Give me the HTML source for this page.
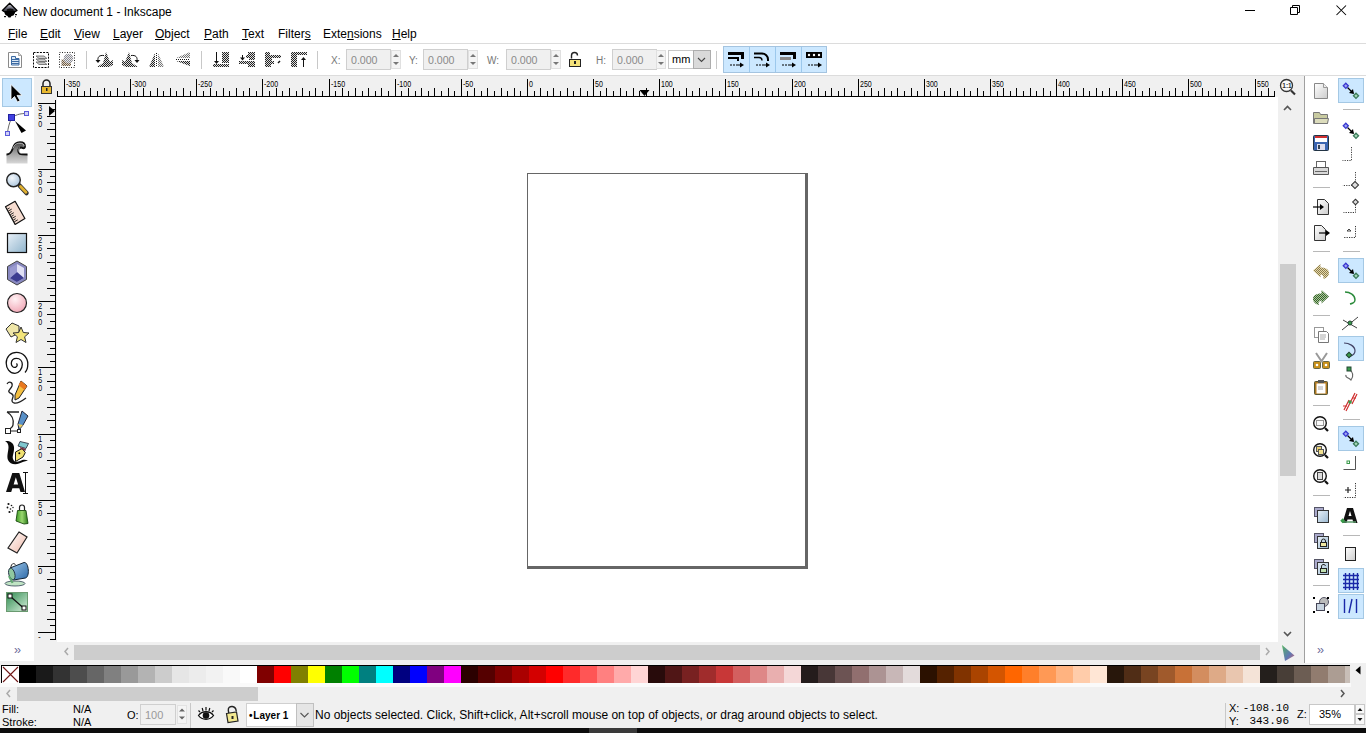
<!DOCTYPE html>
<html><head><meta charset="utf-8"><title>New document 1 - Inkscape</title>
<style>
html,body{margin:0;padding:0}
body{width:1366px;height:733px;position:relative;overflow:hidden;background:#fff;font-family:"Liberation Sans",sans-serif;color:#000}
.a{position:absolute}
.t{position:absolute;white-space:nowrap;font-size:12px;line-height:14px}
.menu u{text-decoration:underline;text-underline-offset:1px;text-decoration-thickness:1px}
.entry{position:absolute;background:#f0f0f0;border:1px solid #cfcfcf;box-sizing:border-box;color:#8a8a8a;font-size:12px;line-height:21px;padding-left:4px}
.spin{position:absolute;background:#f4f4f4;border:1px solid #e0e0e0;box-sizing:border-box}
.sep{position:absolute;background:#c8c8c8}
</style></head><body>
<!-- title bar -->
<div class="t" style="left:23px;top:5px;font-size:12px">New document 1 - Inkscape</div>
<svg class="a" style="left:0;top:0" width="22" height="22" viewBox="0 0 22 22">
<defs><linearGradient id="ig" x1="0" y1="0" x2="0" y2="1"><stop offset="0" stop-color="#f0f0f0"/><stop offset="0.55" stop-color="#606070"/><stop offset="1" stop-color="#111"/></linearGradient></defs>
<path d="M9.7 3.2L17 10.5L13 13L9.7 11.5L6.5 13L2.4 10.5Z" fill="url(#ig)" stroke="#000" stroke-width="1.3" stroke-linejoin="round"/>
<ellipse cx="10.2" cy="10.3" rx="3.5" ry="1.8" fill="#111"/>
<path d="M5 11L15 11L15 13L13.5 15.5L11.5 16L10.5 17.5L8.5 17.5L7.5 16L5.5 15L4.5 13Z" fill="#000"/>
<rect x="4" y="16" width="2" height="1.2" fill="#111"/><rect x="15" y="14" width="2" height="1.2" fill="#111"/><rect x="15" y="16.2" width="1" height="1" fill="#333"/>
</svg>
<svg class="a" style="left:1236px;top:0" width="130" height="22">
<rect x="9" y="10" width="10" height="1" fill="#000"/>
<path d="M54.5 7.5h7v7h-7z M56.5 7.5v-2h7v7h-2" stroke="#000" fill="none"/>
<path d="M100.5 5.5L110 15M110 5.5L100.5 15" stroke="#000" stroke-width="1.05" fill="none"/>
</svg>
<!-- menu -->
<div class="t menu" style="left:8px;top:27px"><u>F</u>ile</div>
<div class="t menu" style="left:40px;top:27px"><u>E</u>dit</div>
<div class="t menu" style="left:74px;top:27px"><u>V</u>iew</div>
<div class="t menu" style="left:113px;top:27px"><u>L</u>ayer</div>
<div class="t menu" style="left:155px;top:27px"><u>O</u>bject</div>
<div class="t menu" style="left:204px;top:27px"><u>P</u>ath</div>
<div class="t menu" style="left:242px;top:27px"><u>T</u>ext</div>
<div class="t menu" style="left:278px;top:27px">Filter<u>s</u></div>
<div class="t menu" style="left:323px;top:27px">Exte<u>n</u>sions</div>
<div class="t menu" style="left:392px;top:27px"><u>H</u>elp</div>
<div class="a" style="left:0;top:43px;width:1366px;height:1px;background:#dcdcdc"></div>
<!-- toolbar -->
<svg class="a" style="left:0;top:44px" width="830" height="31" viewBox="0 44 830 31">
<defs>
<pattern id="chk" width="2" height="2" patternUnits="userSpaceOnUse"><rect width="2" height="2" fill="#ddd"/><rect width="1" height="1" fill="#222"/><rect x="1" y="1" width="1" height="1" fill="#222"/></pattern>
<pattern id="chkl" width="2" height="2" patternUnits="userSpaceOnUse"><rect width="2" height="2" fill="#eee"/><rect width="1" height="1" fill="#777"/><rect x="1" y="1" width="1" height="1" fill="#777"/></pattern>
</defs>
<!-- doc props -->
<path d="M8.5 52.5h10l3 3v12h-13z" fill="#fff" stroke="#8a8a8a"/>
<path d="M18.5 52.5v3h3" fill="#ddd" stroke="#aaa"/>
<path d="M11.5 56.5h4v2h3.5v6.5h-7.5z" fill="#dbe8f4" stroke="#3b6aa3"/>
<rect x="12" y="59" width="7" height="1" fill="#3b6aa3"/><rect x="12" y="61" width="7" height="1" fill="#3b6aa3"/><rect x="12" y="63" width="7" height="1" fill="#3b6aa3"/>
<!-- select all -->
<rect x="33.5" y="52.5" width="15" height="15" fill="none" stroke="#000" stroke-dasharray="2 1.2"/>
<path d="M36 56h8l3 2.5h-8z M36 59h8l3 2.5h-8z M36 62h8l3 2.5h-8z" fill="#ccc" stroke="#666" stroke-width="0.8"/>
<!-- select all all layers -->
<rect x="59.5" y="52.5" width="15" height="15" fill="none" stroke="#222" stroke-dasharray="1 1.5"/>
<pattern id="chkc" width="2" height="2" patternUnits="userSpaceOnUse"><rect width="2" height="2" fill="#e8e8ec"/><rect width="1" height="1" fill="#8a8a90"/><rect x="1" y="1" width="1" height="1" fill="#8a8a90"/></pattern>
<pattern id="chkb" width="2" height="2" patternUnits="userSpaceOnUse"><rect width="2" height="2" fill="#e0d4c0"/><rect width="1" height="1" fill="#6a5a4a"/><rect x="1" y="1" width="1" height="1" fill="#6a5a4a"/></pattern>
<path d="M61.5 59.5h4l1 1h4.5v5.5h-9.5z" fill="url(#chkb)"/>
<circle cx="68.5" cy="58.5" r="4.8" fill="url(#chkc)"/>
<rect x="86" y="51" width="1" height="18" fill="#c8c8c8"/>
<!-- rotate ccw -->
<path d="M106 52L110 62L113 60V65L109 67H97L103 63Z" fill="url(#chk)"/>
<path d="M104 55.5C99 55 97.5 57 98 61" fill="none" stroke="#111" stroke-width="1"/><path d="M95.5 60h5l-2.5 3z" fill="#111"/>
<!-- rotate cw -->
<path d="M129 52L125 62L122 60V65L126 67H138L132 63Z" fill="url(#chk)"/>
<path d="M131 55.5C136 55 137.5 57 137 61" fill="none" stroke="#111" stroke-width="1"/><path d="M134.5 60h5l-2.5 3z" fill="#111"/>
<!-- flip h -->
<path d="M155 53V67H149Z" fill="url(#chk)"/><path d="M158 53V67H164Z" fill="url(#chkl)"/>
<path d="M156.5 53V67" stroke="#111" stroke-dasharray="1 1"/>
<!-- flip v -->
<path d="M190 52V58H176Z" fill="url(#chkl)"/><path d="M190 66V61H176Z" fill="url(#chk)"/>
<path d="M176 59.5H190" stroke="#111" stroke-dasharray="1 1"/>
<rect x="201" y="51" width="1" height="18" fill="#c8c8c8"/>
<!-- z-order -->
<g fill="url(#chk)">
<rect x="222" y="52" width="7" height="11"/><rect x="213" y="64" width="16" height="3"/>
<rect x="248" y="52" width="7" height="3"/><rect x="246" y="55" width="9" height="3"/><rect x="249" y="58" width="6" height="2"/><rect x="239" y="61" width="16" height="3"/><rect x="248" y="64" width="7" height="3"/>
<rect x="265" y="52" width="5" height="3"/><rect x="265" y="55" width="16" height="3"/><rect x="265" y="58" width="7" height="3"/><rect x="265" y="61" width="9" height="3"/><rect x="265" y="64" width="6" height="3"/>
<rect x="291" y="52" width="16" height="3"/><rect x="291" y="55" width="6" height="12"/>
</g>
<path d="M216.5 52V63" stroke="#111"/><path d="M214 61h5l-2.5 3z" fill="#111"/>
<path d="M242.5 55V59" stroke="#111"/><path d="M240 57.5h5l-2.5 3z" fill="#111"/>
<path d="M278 63L280 61" stroke="#111" stroke-width="1.5"/>
<path d="M303.5 58V67" stroke="#111"/><path d="M301 60h5l-2.5 -3z" fill="#111"/>
<rect x="317" y="51" width="1" height="18" fill="#c8c8c8"/>
<!-- lock -->
<path d="M571.5 58.5v-3a3 3 0 0 1 6 0" fill="none" stroke="#222" stroke-width="1.4"/>
<rect x="569.5" y="59.5" width="11" height="7" fill="#f5e27a" stroke="#222"/>
<rect x="574" y="61" width="2" height="3" fill="#222"/>
<rect x="716" y="51" width="1" height="18" fill="#c8c8c8"/>
<!-- blue toggle group -->
<rect x="723.5" y="46.5" width="103" height="26" fill="#cce8ff" stroke="#a4c4e0"/>
<rect x="749" y="47" width="1" height="25" fill="#9cc8ec"/><rect x="775" y="47" width="1" height="25" fill="#9cc8ec"/><rect x="801" y="47" width="1" height="25" fill="#9cc8ec"/>
<g fill="#000">
<rect x="728" y="52" width="16" height="3"/><rect x="741" y="52" width="3" height="7"/><rect x="728" y="57" width="11" height="2"/><rect x="737" y="57" width="2" height="4"/>
<path d="M754 53.5h8a6 6 0 0 1 6 6v1.5" fill="none" stroke="#000" stroke-width="2"/><path d="M754 57.5h5a3 3 0 0 1 3 3" fill="none" stroke="#000" stroke-width="1.4"/>
<rect x="780" y="52" width="16" height="3"/><rect x="793" y="52" width="3" height="7"/><rect x="780" y="57" width="11" height="3" fill="#888"/>
<rect x="806" y="52" width="16" height="6"/>
</g>
<g transform="translate(26 0)"><rect x="754" y="52" width="0" height="0"/></g>
<g fill="#000">
<path d="M730 65h2M733 65h2M736 65h4" stroke="#000" stroke-width="1.2"/><path d="M740 62.5L744 65L740 67.5Z"/>
<path d="M756 65h2M759 65h2M762 65h4" stroke="#000" stroke-width="1.2"/><path d="M766 62.5L770 65L766 67.5Z"/>
<path d="M782 65h2M785 65h2M788 65h4" stroke="#000" stroke-width="1.2"/><path d="M792 62.5L796 65L792 67.5Z"/>
<path d="M808 65h2M811 65h2M814 65h4" stroke="#000" stroke-width="1.2"/><path d="M818 62.5L822 65L818 67.5Z"/>
</g>
<g fill="#fff"><circle cx="809" cy="55" r="1.2"/><circle cx="814" cy="55" r="1.2"/><circle cx="819" cy="55" r="1.2"/></g>
</svg>
<div class="t" style="left:331px;top:55px;font-size:10px;line-height:12px;color:#777">X:</div>
<div class="entry" style="left:346px;top:49px;width:45px;height:21px;font-size:10.6px">0.000</div>
<div class="spin" style="left:391px;top:50px;width:10px;height:19px"></div>
<div class="t" style="left:409px;top:55px;font-size:10px;line-height:12px;color:#777">Y:</div>
<div class="entry" style="left:423px;top:49px;width:45px;height:21px;font-size:10.6px">0.000</div>
<div class="spin" style="left:468px;top:50px;width:10px;height:19px"></div>
<div class="t" style="left:487px;top:55px;font-size:10px;line-height:12px;color:#777">W:</div>
<div class="entry" style="left:506px;top:49px;width:45px;height:21px;font-size:10.6px">0.000</div>
<div class="spin" style="left:551px;top:50px;width:10px;height:19px"></div>
<div class="t" style="left:596px;top:55px;font-size:10px;line-height:12px;color:#777">H:</div>
<div class="entry" style="left:612px;top:49px;width:45px;height:21px;font-size:10.6px">0.000</div>
<div class="spin" style="left:656px;top:50px;width:10px;height:19px"></div>
<div class="a" style="left:668px;top:50px;width:26px;height:19px;background:#fff;border:1px solid #c8c8c8;box-sizing:border-box;font-size:11px;line-height:17px;padding-left:3px">mm</div>
<div class="a" style="left:693px;top:50px;width:18px;height:19px;background:#dadada;border:1px solid #adadad;box-sizing:border-box"></div>
<svg class="a" style="left:0;top:44px" width="720" height="31" viewBox="0 44 720 31">
<g fill="#777">
<path d="M393 57l3-3 3 3z"/><path d="M393 62l3 3 3-3z"/>
<path d="M470 57l3-3 3 3z"/><path d="M470 62l3 3 3-3z"/>
<path d="M553 57l3-3 3 3z"/><path d="M553 62l3 3 3-3z"/>
<path d="M658 57l3-3 3 3z"/><path d="M658 62l3 3 3-3z"/>
</g>
<path d="M698 58l3.5 3.5l3.5-3.5" fill="none" stroke="#444" stroke-width="1.1"/>
</svg>
<div class="a" style="left:0;top:75px;width:1366px;height:1px;background:#dcdcdc"></div>

<!-- toolbox -->
<svg class="a" style="left:0;top:76px" width="35" height="564" viewBox="0 76 35 564">
<defs>
<linearGradient id="rectg" x1="0" y1="0" x2="1" y2="1"><stop offset="0" stop-color="#e8f0f8"/><stop offset="1" stop-color="#8fb4cc"/></linearGradient>
<radialGradient id="zg" cx="0.4" cy="0.35" r="0.7"><stop offset="0" stop-color="#f4f8fc"/><stop offset="1" stop-color="#a9c4dc"/></radialGradient>
<radialGradient id="cg" cx="0.4" cy="0.3" r="0.8"><stop offset="0" stop-color="#fff2f4"/><stop offset="1" stop-color="#f0a0b0"/></radialGradient>
<linearGradient id="twg" x1="0" y1="0" x2="0" y2="1"><stop offset="0" stop-color="#555"/><stop offset="1" stop-color="#ddd"/></linearGradient>
<linearGradient id="gg" x1="0" y1="0" x2="1" y2="1"><stop offset="0" stop-color="#2e8b50"/><stop offset="1" stop-color="#d8f0dc"/></linearGradient>
</defs>
<rect x="2.5" y="78.5" width="29" height="28" fill="#cce8ff" stroke="#a4c8e4"/>
<!-- selector -->
<path d="M11 84.5V100l3.5-3.5l3 5.5l2.5-1.3l-3-5.3h5z" fill="#000" stroke="#fff" stroke-width="0.8"/>
<!-- node -->
<path d="M12 117.5C17 114 22 113.5 26 113.5M11.5 118C9 124 8 128 7.5 133" stroke="#555" fill="none" stroke-width="0.9"/>
<rect x="8.5" y="114.5" width="6" height="6" fill="#4040e0" stroke="#2020a0"/>
<rect x="24.5" y="111.5" width="4" height="4" fill="#d0d0f8" stroke="#5a5ad8"/>
<rect x="5.5" y="131.5" width="4" height="4" fill="#d0d0f8" stroke="#5a5ad8"/>
<path d="M15 121L26 130.5L21.5 133Z" fill="#000"/>
<!-- tweak -->
<linearGradient id="twg2" x1="0" y1="0" x2="0" y2="1"><stop offset="0" stop-color="#444"/><stop offset="0.45" stop-color="#999"/><stop offset="1" stop-color="#d8d8d8"/></linearGradient>
<path d="M6.5 154.5C10 154.5 11.5 152 12.5 149C14 144 16 142.3 20 142.3C23.5 142.3 25 144 25 146.5C25 148 24 148.5 23 148.2C21.5 147 20 147.5 19 148.5C17.8 150 18 152.5 20 154C21 154.5 23 154.5 27.5 154.5V163.5H6.5Z" fill="url(#twg2)"/>
<path d="M6.5 154.5C10 154.5 11.5 152 12.5 149C14 144 16 142.3 20 142.3C23.5 142.3 25 144 25 146.5C25 148 24 148.5 23 148.2C21.5 147 20 147.5 19 148.5C17.8 150 18 152.5 20 154C21 154.5 23 154.5 27.5 154.5" fill="none" stroke="#111" stroke-width="1.9"/>
<path d="M13 148.5C14.5 144.5 16.5 143.2 20 143.2C22.5 143.2 24 144.2 24.2 146.2M19.5 147.5C18.5 149 18.5 152 20.5 153.2" fill="none" stroke="#fff" stroke-width="0.7"/>
<!-- zoom -->
<path d="M19.5 185.5L26.5 193" stroke="#333" stroke-width="4.5" stroke-linecap="round"/>
<path d="M20.5 186.5L26 192.3" stroke="#e0b030" stroke-width="2.8" stroke-linecap="round"/>
<circle cx="13.5" cy="180" r="6.8" fill="url(#zg)" stroke="#222" stroke-width="1.4"/>
<!-- measure -->
<path d="M5.5 206.8L15.1 201.3L24.9 218.5L15.1 224.4Z" fill="#f6dcd0" stroke="#111" stroke-width="1.2" stroke-linejoin="round"/>
<path d="M7.21 209.29l2.44 -1.38M8.22 211.08l3.48 -1.97M9.23 212.87l2.44 -1.38M10.24 214.66l3.48 -1.97M11.26 216.44l2.44 -1.38M12.27 218.23l3.48 -1.97M13.28 220.02l2.44 -1.38M14.29 221.81l3.48 -1.97" stroke="#111" stroke-width="0.9"/>
<!-- rect -->
<rect x="7.5" y="233.5" width="19" height="19" fill="url(#rectg)" stroke="#111" stroke-width="1.2"/>
<!-- 3d box -->
<path d="M17 261L26.5 266.5V279.5L17 285L7.5 279.5V266.5Z" fill="#8888c0" stroke="#444" stroke-width="1"/>
<path d="M17 264L24 268V278L17 282V272Z" fill="#e0e0f4"/>
<path d="M17 272L24 278L17 282L10 278Z" fill="#3c3c90"/>
<path d="M17 264V272L10 278V268Z" fill="#9a9ad0"/>
<!-- circle -->
<circle cx="17" cy="303" r="9.5" fill="url(#cg)" stroke="#222" stroke-width="1.2"/>
<!-- star -->
<path d="M6 329L12 323L19 326L19 333L11 337Z" fill="#efe6a8" stroke="#333" stroke-width="1"/>
<path d="M21 327L23.3 332.5L29 333L24.6 336.8L26 342.5L21 339.5L16 342.5L17.4 336.8L13 333L18.7 332.5Z" fill="#f2e47a" stroke="#333" stroke-width="1"/>
<!-- spiral -->
<path d="M16.3 363.6C17.5 364 17.8 366.5 15.5 367.3C13 368 11.2 365.5 11.3 363.2C11.5 360 13.8 358.3 16.5 358.3C20 358.3 22.3 361 22.3 364.5C22.3 369 18.8 373.3 15 373.3C9.5 373.3 6.2 368 6.2 363C6.2 357 10.5 352.3 16.5 352.3C23 352.3 27.8 357.5 27.8 364C27.8 368 26.5 371 25 372.5" fill="none" stroke="#111" stroke-width="1.3"/>
<!-- pencil -->
<path d="M7 384C9 381 13 382 12 386C11 389 8 390 9 392C10 394 14 393 13 397C12 400 11 402 14 403C18 404 22 401 26 398" fill="none" stroke="#222" stroke-width="1.3"/>
<path d="M21 381L27 386L19 398L15 400L15 395Z" fill="#f5c040" stroke="#222" stroke-width="1"/>
<path d="M21 381L27 386L24.5 390L18.5 385Z" fill="#e87820"/>
<!-- pen -->
<path d="M7 412H19M7 412C12 415 14 420 13 425C12.5 428 10 429 8 430" fill="none" stroke="#222" stroke-width="1.3"/>
<rect x="5.5" y="428.5" width="5" height="5" fill="#fff" stroke="#222"/><path d="M11 431H17" stroke="#222"/><rect x="17.5" y="429.5" width="3" height="3" fill="#fff" stroke="#222"/>
<path d="M22 411L28 416L23 425L19 430L18 424Z" fill="#5890c8" stroke="#223" stroke-width="1"/>
<path d="M18 424L23 425L20 428Z" fill="#f0d060"/>
<!-- calligraphy -->
<path d="M5 441C9 440.5 13.5 442 14 447C14.5 452 12 456 13 459C14 462 17 462.5 20 461C23 459.5 25 459.5 28 460.5C25 461 22 462 19 463.5C15 465 9.5 464 8 460C6.5 456 8.5 451 8.5 447C8.5 444 7 442 5 441Z" fill="#0a0a0a"/>
<path d="M15.5 452L22 448.5L25.3 452.5L23 457L15.5 461.5Z" fill="#f0e070" stroke="#111" stroke-width="1"/>
<circle cx="19.3" cy="453.2" r="1" fill="#000"/>
<path d="M18 446L20 441.5L28.5 443.5L26 448.5Z" fill="#80c8d0" stroke="#223" stroke-width="0.8"/>
<path d="M20 447L26 449L25.3 451L20.5 449Z" fill="#703040"/>
<!-- text -->
<path d="M12.3 473H19.3L25 492H20.5L19.3 488.2H12.4L11.2 492H6ZM13.6 484.4H18.1L15.85 477.3Z" fill="#111"/>
<path d="M23 472.5h5M25.5 472.5V493.5M23 493.5h5" stroke="#111" stroke-width="1" fill="none"/>
<!-- spray -->
<g fill="#111"><circle cx="8.5" cy="504" r="1.1"/><circle cx="11.5" cy="505.5" r="0.8"/><circle cx="7.5" cy="507.5" r="0.9"/><circle cx="10.5" cy="509" r="0.8"/><circle cx="13" cy="507.5" r="0.7"/><circle cx="9.5" cy="512" r="1.1"/><circle cx="12.5" cy="511" r="0.7"/></g>
<path d="M19.5 510v-2.5a2.5 2.5 0 0 1 5 0v2.5" fill="none" stroke="#222" stroke-width="1.2"/>
<linearGradient id="spg" x1="0" y1="0" x2="1" y2="0"><stop offset="0" stop-color="#3a9a20"/><stop offset="0.5" stop-color="#9ad870"/><stop offset="1" stop-color="#2a7a18"/></linearGradient>
<path d="M17.5 510.5L26 510.5L28 523.5L24 524L16 521Z" fill="url(#spg)" stroke="#1a4a10" stroke-width="0.9"/>
<!-- eraser -->
<linearGradient id="erg" x1="0" y1="0" x2="1" y2="1"><stop offset="0" stop-color="#fff"/><stop offset="1" stop-color="#f0b8a8"/></linearGradient><path d="M19 532L27 537L17 553L8 548Z" fill="url(#erg)" stroke="#222" stroke-width="1.2"/>
<!-- bucket -->
<ellipse cx="15" cy="583.5" rx="10" ry="2.5" fill="#c0e4c4" stroke="#345" stroke-width="0.8"/>
<linearGradient id="bkg" x1="0" y1="0" x2="1" y2="1"><stop offset="0" stop-color="#a0c8e8"/><stop offset="1" stop-color="#2a68a8"/></linearGradient>
<path d="M10 568L24 562.5C26.5 562 28 566 28.3 570C28.6 574 27.5 577.5 25.5 578L13.5 580Z" fill="url(#bkg)" stroke="#123" stroke-width="1"/>
<ellipse cx="11.8" cy="574" rx="3" ry="6" transform="rotate(-15 11.8 574)" fill="#90c8a0" stroke="#234" stroke-width="0.9"/>
<path d="M11 568C10.5 564 14 562 15.5 565" fill="none" stroke="#222" stroke-width="1"/>
<path d="M9 576C10 579 12 581 12.5 583" stroke="#60a870" stroke-width="2" fill="none"/>
<!-- gradient -->
<rect x="6.5" y="592.5" width="21" height="19" fill="url(#gg)" stroke="#6a9a70"/>
<path d="M10.5 596.5L23.5 608" stroke="#111" stroke-width="1.2"/>
<rect x="8" y="594" width="4" height="4" fill="#fff" stroke="#111"/>
<rect x="22" y="606" width="4" height="4" fill="#fff" stroke="#111"/>
</svg>
<div class="a" style="left:14px;top:644px;font-size:12px;line-height:12px;color:#6a6a9a;letter-spacing:-1px">&#8250;&#8250;</div>
<!-- rulers bg -->
<div class="a" style="left:34px;top:76px;width:1244px;height:21px;background:#f0f0f0"></div>
<div class="a" style="left:34px;top:97px;width:23px;height:545px;background:#f0f0f0"></div>
<svg style="position:absolute;left:57px;top:76px" width="1218" height="21"><rect x="0" y="20" width="1218" height="1" fill="#000"/><path d="M0.5 15V20M7.5 3V20M14.5 15V20M20.5 12V20M27.5 15V20M33.5 12V20M40.5 15V20M47.5 12V20M53.5 15V20M60.5 12V20M67.5 15V20M73.5 3V20M80.5 15V20M86.5 12V20M93.5 15V20M100.5 12V20M106.5 15V20M113.5 12V20M119.5 15V20M126.5 12V20M133.5 15V20M139.5 3V20M146.5 15V20M153.5 12V20M159.5 15V20M166.5 12V20M172.5 15V20M179.5 12V20M186.5 15V20M192.5 12V20M199.5 15V20M205.5 3V20M212.5 15V20M219.5 12V20M225.5 15V20M232.5 12V20M239.5 15V20M245.5 12V20M252.5 15V20M258.5 12V20M265.5 15V20M272.5 3V20M278.5 15V20M285.5 12V20M291.5 15V20M298.5 12V20M305.5 15V20M311.5 12V20M318.5 15V20M324.5 12V20M331.5 15V20M338.5 3V20M344.5 15V20M351.5 12V20M358.5 15V20M364.5 12V20M371.5 15V20M377.5 12V20M384.5 15V20M391.5 12V20M397.5 15V20M404.5 3V20M410.5 15V20M417.5 12V20M424.5 15V20M430.5 12V20M437.5 15V20M444.5 12V20M450.5 15V20M457.5 12V20M463.5 15V20M470.5 3V20M477.5 15V20M483.5 12V20M490.5 15V20M496.5 12V20M503.5 15V20M510.5 12V20M516.5 15V20M523.5 12V20M530.5 15V20M536.5 3V20M543.5 15V20M549.5 12V20M556.5 15V20M563.5 12V20M569.5 15V20M576.5 12V20M582.5 15V20M589.5 12V20M596.5 15V20M602.5 3V20M609.5 15V20M616.5 12V20M622.5 15V20M629.5 12V20M635.5 15V20M642.5 12V20M649.5 15V20M655.5 12V20M662.5 15V20M668.5 3V20M675.5 15V20M682.5 12V20M688.5 15V20M695.5 12V20M701.5 15V20M708.5 12V20M715.5 15V20M721.5 12V20M728.5 15V20M735.5 3V20M741.5 15V20M748.5 12V20M754.5 15V20M761.5 12V20M768.5 15V20M774.5 12V20M781.5 15V20M787.5 12V20M794.5 15V20M801.5 3V20M807.5 15V20M814.5 12V20M821.5 15V20M827.5 12V20M834.5 15V20M840.5 12V20M847.5 15V20M854.5 12V20M860.5 15V20M867.5 3V20M873.5 15V20M880.5 12V20M887.5 15V20M893.5 12V20M900.5 15V20M907.5 12V20M913.5 15V20M920.5 12V20M926.5 15V20M933.5 3V20M940.5 15V20M946.5 12V20M953.5 15V20M959.5 12V20M966.5 15V20M973.5 12V20M979.5 15V20M986.5 12V20M993.5 15V20M999.5 3V20M1006.5 15V20M1012.5 12V20M1019.5 15V20M1026.5 12V20M1032.5 15V20M1039.5 12V20M1045.5 15V20M1052.5 12V20M1059.5 15V20M1065.5 3V20M1072.5 15V20M1078.5 12V20M1085.5 15V20M1092.5 12V20M1098.5 15V20M1105.5 12V20M1112.5 15V20M1118.5 12V20M1125.5 15V20M1131.5 3V20M1138.5 15V20M1145.5 12V20M1151.5 15V20M1158.5 12V20M1164.5 15V20M1171.5 12V20M1178.5 15V20M1184.5 12V20M1191.5 15V20M1198.5 3V20M1204.5 15V20M1211.5 12V20M1217.5 15V20" stroke="#000" stroke-width="1" fill="none"/><g font-family="Liberation Sans" font-size="8.6" fill="#000"><text transform="translate(9 11) scale(0.82 1)">-350</text><text transform="translate(75 11) scale(0.82 1)">-300</text><text transform="translate(141 11) scale(0.82 1)">-250</text><text transform="translate(207 11) scale(0.82 1)">-200</text><text transform="translate(274 11) scale(0.82 1)">-150</text><text transform="translate(340 11) scale(0.82 1)">-100</text><text transform="translate(406 11) scale(0.82 1)">-50</text><text transform="translate(472 11) scale(0.82 1)">0</text><text transform="translate(538 11) scale(0.82 1)">50</text><text transform="translate(604 11) scale(0.82 1)">100</text><text transform="translate(670 11) scale(0.82 1)">150</text><text transform="translate(737 11) scale(0.82 1)">200</text><text transform="translate(803 11) scale(0.82 1)">250</text><text transform="translate(869 11) scale(0.82 1)">300</text><text transform="translate(935 11) scale(0.82 1)">350</text><text transform="translate(1001 11) scale(0.82 1)">400</text><text transform="translate(1067 11) scale(0.82 1)">450</text><text transform="translate(1133 11) scale(0.82 1)">500</text><text transform="translate(1200 11) scale(0.82 1)">550</text></g></svg>
<svg style="position:absolute;left:35px;top:97px" width="22" height="543"><rect x="20" y="3" width="1" height="540" fill="#000"/><path d="M3 6.5H20M15 12.5H20M12 19.5H20M15 26.5H20M12 32.5H20M15 39.5H20M12 46.5H20M15 52.5H20M12 59.5H20M15 65.5H20M3 72.5H20M15 79.5H20M12 85.5H20M15 92.5H20M12 98.5H20M15 105.5H20M12 112.5H20M15 118.5H20M12 125.5H20M15 131.5H20M3 138.5H20M15 145.5H20M12 151.5H20M15 158.5H20M12 165.5H20M15 171.5H20M12 178.5H20M15 184.5H20M12 191.5H20M15 198.5H20M3 204.5H20M15 211.5H20M12 217.5H20M15 224.5H20M12 231.5H20M15 237.5H20M12 244.5H20M15 251.5H20M12 257.5H20M15 264.5H20M3 270.5H20M15 277.5H20M12 284.5H20M15 290.5H20M12 297.5H20M15 303.5H20M12 310.5H20M15 317.5H20M12 323.5H20M15 330.5H20M3 337.5H20M15 343.5H20M12 350.5H20M15 356.5H20M12 363.5H20M15 370.5H20M12 376.5H20M15 383.5H20M12 389.5H20M15 396.5H20M3 403.5H20M15 409.5H20M12 416.5H20M15 423.5H20M12 429.5H20M15 436.5H20M12 442.5H20M15 449.5H20M12 456.5H20M15 462.5H20M3 469.5H20M15 475.5H20M12 482.5H20M15 489.5H20M12 495.5H20M15 502.5H20M12 508.5H20M15 515.5H20M12 522.5H20M15 528.5H20M3 535.5H20M15 542.5H20" stroke="#000" stroke-width="1" fill="none"/><g font-family="Liberation Sans" font-size="8.6" fill="#000"><text transform="translate(3.299999999999997 14.3) scale(0.82 1)">3</text><text transform="translate(3.299999999999997 22.3) scale(0.82 1)">5</text><text transform="translate(3.299999999999997 30.3) scale(0.82 1)">0</text><text transform="translate(3.299999999999997 80.3) scale(0.82 1)">3</text><text transform="translate(3.299999999999997 88.3) scale(0.82 1)">0</text><text transform="translate(3.299999999999997 96.3) scale(0.82 1)">0</text><text transform="translate(3.299999999999997 146.3) scale(0.82 1)">2</text><text transform="translate(3.299999999999997 154.3) scale(0.82 1)">5</text><text transform="translate(3.299999999999997 162.3) scale(0.82 1)">0</text><text transform="translate(3.299999999999997 212.3) scale(0.82 1)">2</text><text transform="translate(3.299999999999997 220.3) scale(0.82 1)">0</text><text transform="translate(3.299999999999997 228.3) scale(0.82 1)">0</text><text transform="translate(3.299999999999997 278.3) scale(0.82 1)">1</text><text transform="translate(3.299999999999997 286.3) scale(0.82 1)">5</text><text transform="translate(3.299999999999997 294.3) scale(0.82 1)">0</text><text transform="translate(3.299999999999997 345.3) scale(0.82 1)">1</text><text transform="translate(3.299999999999997 353.3) scale(0.82 1)">0</text><text transform="translate(3.299999999999997 361.3) scale(0.82 1)">0</text><text transform="translate(3.299999999999997 411.3) scale(0.82 1)">5</text><text transform="translate(3.299999999999997 419.3) scale(0.82 1)">0</text><text transform="translate(3.299999999999997 477.3) scale(0.82 1)">0</text><text transform="translate(3.299999999999997 543.3) scale(0.82 1)">-</text><text transform="translate(3.299999999999997 551.3) scale(0.82 1)">5</text><text transform="translate(3.299999999999997 559.3) scale(0.82 1)">0</text></g></svg>
<!-- scrollbar column -->
<div class="a" style="left:1275px;top:76px;width:29px;height:584px;background:#f0f0f0"></div>
<div class="a" style="left:1278px;top:97px;width:0px;height:0px;"></div>
<div class="a" style="left:1280px;top:264px;width:16px;height:212px;background:#cdcdcd"></div>
<div class="a" style="left:1304px;top:76px;width:1px;height:587px;background:#a0a0a0"></div>
<!-- canvas placeholder -->
<div class="a" style="left:57px;top:97px;width:1221px;height:545px;background:#fff"></div>
<div class="a" style="left:527px;top:173px;width:277px;height:392px;border-left:1px solid #666;border-top:1px solid #666;border-right:3px solid #666;border-bottom:3px solid #666"></div>
<!-- hscroll -->
<div class="a" style="left:34px;top:642px;width:1270px;height:19px;background:#f0f0f0"></div>
<div class="a" style="left:74px;top:645px;width:1186px;height:15px;background:#cdcdcd"></div>
<!-- right panels -->
<svg class="a" style="left:1305px;top:76px" width="61" height="586" viewBox="1305 76 61 586">
<defs>
<linearGradient id="pg" x1="0" y1="0" x2="1" y2="1"><stop offset="0" stop-color="#fff"/><stop offset="1" stop-color="#ccc"/></linearGradient>
<linearGradient id="bl" x1="0" y1="0" x2="1" y2="1"><stop offset="0" stop-color="#e8f0f8"/><stop offset="1" stop-color="#9ab8d0"/></linearGradient>
<pattern id="chky" width="2" height="2" patternUnits="userSpaceOnUse"><rect width="2" height="2" fill="#e8dca8"/><rect width="1" height="1" fill="#8a7a50"/><rect x="1" y="1" width="1" height="1" fill="#8a7a50"/></pattern>
<pattern id="chkg" width="2" height="2" patternUnits="userSpaceOnUse"><rect width="2" height="2" fill="#a8d098"/><rect width="1" height="1" fill="#3a5a30"/><rect x="1" y="1" width="1" height="1" fill="#3a5a30"/></pattern>
</defs>
<!-- snap highlighted buttons -->
<g fill="#cce8ff" stroke="#a4c8e4">
<rect x="1338.5" y="78.5" width="25" height="24"/>
<rect x="1338.5" y="258.5" width="25" height="24"/>
<rect x="1338.5" y="336.5" width="25" height="24"/>
<rect x="1338.5" y="426.5" width="25" height="24"/>
<rect x="1338.5" y="568.5" width="25" height="24"/>
<rect x="1338.5" y="594.5" width="25" height="24"/>
</g>
<!-- separators -->
<g fill="#b8b8b8">
<rect x="1313" y="187" width="17" height="1"/><rect x="1313" y="251" width="17" height="1"/><rect x="1313" y="315" width="17" height="1"/>
<rect x="1313" y="405" width="17" height="1"/><rect x="1313" y="495" width="17" height="1"/><rect x="1313" y="585" width="17" height="1"/>
<rect x="1343" y="109" width="17" height="1"/><rect x="1343" y="251" width="17" height="1"/><rect x="1343" y="419" width="17" height="1"/><rect x="1343" y="535" width="17" height="1"/>
</g>
<!-- commands -->
<path d="M1314.5 83.5h9l4 4v11h-13z" fill="url(#pg)" stroke="#888"/><path d="M1323.5 83.5v4h4" fill="#eee" stroke="#999"/>
<path d="M1313.5 112.5h6l1 2h7v9h-14z" fill="#c8caa0" stroke="#777"/><path d="M1314.5 118.5h14l-1 5h-13z" fill="#dcdcbc" stroke="#777"/>
<rect x="1313.5" y="135.5" width="15" height="15" rx="1" fill="#3a64b0" stroke="#234"/><rect x="1315" y="136" width="12" height="6" fill="#fff"/><rect x="1315" y="136" width="12" height="2" fill="#d03030"/><rect x="1317" y="144" width="8" height="6" fill="#dde"/><rect x="1318" y="145" width="2" height="4" fill="#345"/>
<rect x="1316.5" y="161.5" width="9" height="6" fill="#fff" stroke="#666"/><path d="M1313.5 167.5h15v7h-15z" fill="#d8d8d8" stroke="#555"/><rect x="1315" y="171" width="12" height="1" fill="#666"/>
<path d="M1317.5 199.5h7l4 4v11h-11z" fill="url(#pg)" stroke="#333"/><path d="M1313 207h9" stroke="#000" stroke-width="1.2"/><path d="M1320 204l4 3l-4 3z" fill="#000"/>
<path d="M1314.5 225.5h7l4 4v11h-11z" fill="url(#pg)" stroke="#333"/><path d="M1319 233h9" stroke="#000" stroke-width="1.2"/><path d="M1326 230l4 3l-4 3z" fill="#000"/>
<path d="M1313 270.5L1320.5 264V267.5C1325 267.5 1329 269 1329 273C1329 276 1326 278.5 1323 279C1324 277 1323.5 275 1320.5 274.5V277.5Z" fill="url(#chky)"/>
<path d="M1329 296.5L1321.5 290V293.5C1317 293.5 1313 295 1313 299C1313 302 1316 304.5 1319 305C1318 303 1318.5 301 1321.5 300.5V303.5Z" fill="url(#chkg)"/>
<rect x="1314.5" y="327.5" width="9" height="10" fill="#fff" stroke="#999"/><path d="M1318.5 331.5h8l2 2v9h-10z" fill="#fff" stroke="#777"/><path d="M1320 335h6M1320 337h6M1320 339h5" stroke="#aaa"/>
<path d="M1316 353L1322 362M1327 353L1321 362" stroke="#999" stroke-width="2"/><rect x="1313.5" y="361.5" width="7" height="7" rx="1" fill="#c8901a" stroke="#664"/><rect x="1322.5" y="361.5" width="7" height="7" rx="1" fill="#c8901a" stroke="#664"/><circle cx="1317" cy="365" r="1.3" fill="#fff"/><circle cx="1326" cy="365" r="1.3" fill="#fff"/>
<rect x="1314.5" y="381.5" width="13" height="13" rx="1" fill="#b07820" stroke="#553"/><rect x="1316.5" y="383.5" width="9" height="10" fill="#fff"/><rect x="1318" y="380" width="6" height="3" fill="#555"/><path d="M1318 387h5M1318 389h5" stroke="#aaa"/>
<circle cx="1320" cy="423" r="6.3" fill="#f8f8f8" stroke="#111" stroke-width="1.4"/><rect x="1316.5" y="420.5" width="7" height="5" fill="none" stroke="#333" stroke-dasharray="1 1"/><path d="M1325 428l3 3" stroke="#111" stroke-width="2.2"/>
<circle cx="1320" cy="450" r="6.3" fill="#f8f8f8" stroke="#111" stroke-width="1.4"/><rect x="1316.5" y="446.5" width="5" height="5" fill="#e8d070" stroke="#555"/><rect x="1318.5" y="449.5" width="5" height="5" fill="#f0e090" stroke="#555"/><path d="M1325 455l3 3" stroke="#111" stroke-width="2.2"/>
<circle cx="1320" cy="476" r="6.3" fill="#f8f8f8" stroke="#111" stroke-width="1.4"/><rect x="1317.5" y="472.5" width="5" height="7" fill="#ddd" stroke="#444"/><path d="M1325 481l3 3" stroke="#111" stroke-width="2.2"/>
<rect x="1314.5" y="507.5" width="9" height="9" fill="#aac" stroke="#556"/><rect x="1317.5" y="510.5" width="11" height="12" fill="url(#bl)" stroke="#333"/>
<rect x="1314.5" y="533.5" width="9" height="9" fill="#aac" stroke="#556"/><rect x="1317.5" y="536.5" width="11" height="12" fill="url(#bl)" stroke="#333"/><rect x="1320.5" y="542.5" width="6" height="4" fill="#f0e8a0" stroke="#222"/><path d="M1321.5 542.5v-1.5a2 2 0 0 1 4 0v1.5" fill="none" stroke="#222"/>
<rect x="1314.5" y="559.5" width="9" height="9" fill="#aac" stroke="#556"/><rect x="1317.5" y="562.5" width="11" height="12" fill="url(#bl)" stroke="#333"/><rect x="1320.5" y="568.5" width="6" height="4" fill="#c0e0b0" stroke="#222"/><path d="M1321.5 568.5v-1.5a2 2 0 0 1 4 -1" fill="none" stroke="#222"/>
<circle cx="1324" cy="602" r="4.5" fill="#bbb" stroke="#556"/><rect x="1316.5" y="603.5" width="8" height="7" fill="#c8d4e0" stroke="#445"/><g fill="#000"><rect x="1313" y="597" width="2" height="2"/><rect x="1327" y="597" width="2" height="2"/><rect x="1313" y="611" width="2" height="2"/><rect x="1327" y="611" width="2" height="2"/></g>
<!-- snap icons -->
<g id="sn"><path d="M1347.5 87.5L1353 93" stroke="#000" stroke-width="1.3"/><path d="M1354 94l-5 -1l4 -4z" fill="#000"/><rect x="1344" y="84" width="3.6" height="3.6" transform="rotate(45 1345.8 85.8)" fill="#a0a8f0" stroke="#3838d0" stroke-width="1.3"/><rect x="1354.2" y="94" width="3.6" height="3.6" transform="rotate(45 1356 95.8)" fill="#a8d8b8" stroke="#3a7a5a" stroke-width="1.3"/></g>
<use href="#sn" y="40"/>
<use href="#sn" y="180"/>
<use href="#sn" y="348"/>
<path d="M1351.5 147v13.5h-9" fill="none" stroke="#444" stroke-dasharray="1.2 1.2"/>
<path d="M1355.5 172v13.5h-13" fill="none" stroke="#444" stroke-dasharray="1.2 1.2"/><rect x="1352.5" y="182.5" width="5" height="5" transform="rotate(45 1355 185)" fill="#ddd" stroke="#333"/>
<path d="M1355.5 202v10.5h-12" fill="none" stroke="#333" stroke-dasharray="1.2 1.2"/><rect x="1353.5" y="200" width="4" height="4" transform="rotate(45 1355.5 202)" fill="#ddd" stroke="#333"/>
<path d="M1355.5 226v11.5h-12" fill="none" stroke="#333" stroke-dasharray="1.2 1.2"/><path d="M1347 231l2 -2l2 2z" fill="none" stroke="#444"/>
<path d="M1345 292C1350 292 1355 295 1355 300C1355 303 1351 304 1350 304M1350 304l3 -1" fill="none" stroke="#2a8a3a" stroke-width="1.4"/>
<path d="M1342 330L1358 317" stroke="#444"/><path d="M1343 320L1357 328" stroke="#444"/><circle cx="1350" cy="323" r="2" fill="#3a9a4a" stroke="#243"/>
<path d="M1344 343C1349 343 1355 346 1355 351C1355 355 1351 356 1349 357" fill="none" stroke="#446" stroke-width="1.2"/><rect x="1347" y="353" width="4" height="4" transform="rotate(45 1349 355)" fill="#3a9a4a" stroke="#243"/>
<path d="M1349 369C1353 372 1354 376 1351 380C1348 377 1345 378 1346 375" fill="none" stroke="#666" stroke-width="1.2"/><rect x="1347" y="367" width="4" height="4" fill="#3a9a4a" stroke="#243"/>
<path d="M1344 410L1349 400M1346 411L1351 401M1350 403L1355 393M1352 404L1357 394" stroke="#d03030" stroke-width="1.2"/><path d="M1343 406h4M1352 398h4" stroke="#d03030"/><circle cx="1350" cy="402" r="1.8" fill="#3a9a4a"/>
<path d="M1355.5 456v13.5h-12" fill="none" stroke="#555"/><rect x="1347" y="461" width="2.5" height="2.5" fill="none" stroke="#3a9a4a"/>
<path d="M1355.5 483v14.5h-12" fill="none" stroke="#333" stroke-dasharray="1.2 1.2"/><path d="M1345 490h6M1348 487v6" stroke="#222" stroke-width="1.2"/>
<path d="M1347 508H1353L1357.5 523H1353.5L1352.5 519.5H1347.5L1346.5 523H1342.5ZM1348.5 516H1351.5L1350 511Z" fill="#111"/><path d="M1342 522H1356" stroke="#5a9a6a" stroke-width="1.5"/><rect x="1341" y="519" width="3.5" height="3.5" transform="rotate(45 1342.7 520.7)" fill="#3a9a4a"/>
<rect x="1345.5" y="547.5" width="10" height="13" fill="url(#pg)" stroke="#222"/>
<path d="M1343 575.5h16M1343 579.5h16M1343 583.5h16M1343 587.5h16M1345.5 573v17M1349.5 573v17M1353.5 573v17M1357.5 573v17" stroke="#1a28a8" stroke-width="1.4"/>
<path d="M1344.5 599v14M1349 613L1352 599M1356.5 599v14" stroke="#1a28a8" stroke-width="1.4"/>
</svg>
<div class="a" style="left:1317px;top:644px;font-size:12px;line-height:12px;color:#6a6a9a;letter-spacing:-1px">&#8250;&#8250;</div>
<!-- palette area -->
<div class="a" style="left:0;top:661px;width:1304px;height:40px;background:#f0f0f0"></div><div class="a" style="left:1304px;top:663px;width:62px;height:38px;background:#f0f0f0"></div>
<div class="a" style="left:0;top:683px;width:1351px;height:4px;background:#fafafa"></div>
<div class="a" style="left:17px;top:687px;width:241px;height:14px;background:#cdcdcd"></div>
<svg style="position:absolute;left:0;top:0" width="1366" height="733"><rect x="1" y="665" width="1349" height="1" fill="#000"/><rect x="1" y="665" width="1" height="18" fill="#000"/><rect x="2" y="666" width="17" height="17" fill="#fff"/><path d="M3 667L18 682M18 667L3 682" stroke="#701818" stroke-width="1.1"/><rect x="19" y="666" width="17" height="17" fill="#000000"/><rect x="36" y="666" width="17" height="17" fill="#1A1A1A"/><rect x="53" y="666" width="17" height="17" fill="#333333"/><rect x="70" y="666" width="17" height="17" fill="#4D4D4D"/><rect x="87" y="666" width="17" height="17" fill="#666666"/><rect x="104" y="666" width="17" height="17" fill="#808080"/><rect x="121" y="666" width="17" height="17" fill="#999999"/><rect x="138" y="666" width="17" height="17" fill="#B3B3B3"/><rect x="155" y="666" width="17" height="17" fill="#CCCCCC"/><rect x="172" y="666" width="17" height="17" fill="#E6E6E6"/><rect x="189" y="666" width="17" height="17" fill="#ECECEC"/><rect x="206" y="666" width="17" height="17" fill="#F2F2F2"/><rect x="223" y="666" width="17" height="17" fill="#F9F9F9"/><rect x="240" y="666" width="17" height="17" fill="#FFFFFF"/><rect x="257" y="666" width="17" height="17" fill="#800000"/><rect x="274" y="666" width="17" height="17" fill="#FF0000"/><rect x="291" y="666" width="17" height="17" fill="#808000"/><rect x="308" y="666" width="17" height="17" fill="#FFFF00"/><rect x="325" y="666" width="17" height="17" fill="#008000"/><rect x="342" y="666" width="17" height="17" fill="#00FF00"/><rect x="359" y="666" width="17" height="17" fill="#008080"/><rect x="376" y="666" width="17" height="17" fill="#00FFFF"/><rect x="393" y="666" width="17" height="17" fill="#000080"/><rect x="410" y="666" width="17" height="17" fill="#0000FF"/><rect x="427" y="666" width="17" height="17" fill="#800080"/><rect x="444" y="666" width="17" height="17" fill="#FF00FF"/><rect x="461" y="666" width="17" height="17" fill="#2B0000"/><rect x="478" y="666" width="17" height="17" fill="#550000"/><rect x="495" y="666" width="17" height="17" fill="#800000"/><rect x="512" y="666" width="17" height="17" fill="#AA0000"/><rect x="529" y="666" width="17" height="17" fill="#D40000"/><rect x="546" y="666" width="17" height="17" fill="#FF0000"/><rect x="563" y="666" width="17" height="17" fill="#FF2A2A"/><rect x="580" y="666" width="17" height="17" fill="#FF5555"/><rect x="597" y="666" width="17" height="17" fill="#FF8080"/><rect x="614" y="666" width="17" height="17" fill="#FFAAAA"/><rect x="631" y="666" width="17" height="17" fill="#FFD5D5"/><rect x="648" y="666" width="17" height="17" fill="#280B0B"/><rect x="665" y="666" width="17" height="17" fill="#501616"/><rect x="682" y="666" width="17" height="17" fill="#782121"/><rect x="699" y="666" width="17" height="17" fill="#A02C2C"/><rect x="716" y="666" width="17" height="17" fill="#C83737"/><rect x="733" y="666" width="17" height="17" fill="#D35F5F"/><rect x="750" y="666" width="17" height="17" fill="#DE8787"/><rect x="767" y="666" width="17" height="17" fill="#E9AFAF"/><rect x="784" y="666" width="17" height="17" fill="#F4D7D7"/><rect x="801" y="666" width="17" height="17" fill="#241C1C"/><rect x="818" y="666" width="17" height="17" fill="#483737"/><rect x="835" y="666" width="17" height="17" fill="#6C5353"/><rect x="852" y="666" width="17" height="17" fill="#916F6F"/><rect x="869" y="666" width="17" height="17" fill="#AC9393"/><rect x="886" y="666" width="17" height="17" fill="#C8B7B7"/><rect x="903" y="666" width="17" height="17" fill="#E3DBDB"/><rect x="920" y="666" width="17" height="17" fill="#2B1100"/><rect x="937" y="666" width="17" height="17" fill="#552200"/><rect x="954" y="666" width="17" height="17" fill="#803300"/><rect x="971" y="666" width="17" height="17" fill="#AA4400"/><rect x="988" y="666" width="17" height="17" fill="#D45500"/><rect x="1005" y="666" width="17" height="17" fill="#FF6600"/><rect x="1022" y="666" width="17" height="17" fill="#FF7F2A"/><rect x="1039" y="666" width="17" height="17" fill="#FF9955"/><rect x="1056" y="666" width="17" height="17" fill="#FFB380"/><rect x="1073" y="666" width="17" height="17" fill="#FFCCAA"/><rect x="1090" y="666" width="17" height="17" fill="#FFE6D5"/><rect x="1107" y="666" width="17" height="17" fill="#28170B"/><rect x="1124" y="666" width="17" height="17" fill="#502D16"/><rect x="1141" y="666" width="17" height="17" fill="#784421"/><rect x="1158" y="666" width="17" height="17" fill="#A05A2C"/><rect x="1175" y="666" width="17" height="17" fill="#C87137"/><rect x="1192" y="666" width="17" height="17" fill="#D38D5F"/><rect x="1209" y="666" width="17" height="17" fill="#DEAA87"/><rect x="1226" y="666" width="17" height="17" fill="#E9C6AF"/><rect x="1243" y="666" width="17" height="17" fill="#F4E3D7"/><rect x="1260" y="666" width="17" height="17" fill="#241F1C"/><rect x="1277" y="666" width="17" height="17" fill="#483E37"/><rect x="1294" y="666" width="17" height="17" fill="#6C5D53"/><rect x="1311" y="666" width="17" height="17" fill="#917C6F"/><rect x="1328" y="666" width="17" height="17" fill="#AC9D93"/><rect x="1345" y="666" width="5" height="17" fill="#C8BEB7"/><path d="M1360.5 666v8.5l-5 -4.25z" fill="#000"/></svg>
<!-- status bar -->
<div class="a" style="left:0;top:701px;width:1366px;height:27px;background:#f0f0f0"></div>
<div class="a" style="left:0;top:728px;width:1366px;height:5px;background:#0c0c0c"></div><div class="a" style="left:589px;top:728px;width:48px;height:5px;background:#3a3a3a"></div>
<div class="t" style="left:2px;top:703px;font-size:11px;line-height:13px">Fill:</div>
<div class="t" style="left:2px;top:716px;font-size:11px;line-height:13px">Stroke:</div>
<div class="t" style="left:73px;top:703px;font-size:11px;line-height:13px">N/A</div>
<div class="t" style="left:73px;top:716px;font-size:11px;line-height:13px">N/A</div>
<div class="t" style="left:127px;top:709px;font-size:11px;line-height:13px">O:</div>
<div class="entry" style="left:140px;top:704px;width:36px;height:21px;line-height:21px;font-size:11px;color:#999">100</div>
<div class="sep" style="left:190px;top:703px;width:1px;height:25px"></div>
<div class="a" style="left:246px;top:703px;width:51px;height:24px;background:#fff;border:1px solid #d0d0d0;box-sizing:border-box"></div>
<div class="a" style="left:296px;top:703px;width:18px;height:24px;background:#e5e5e5;border:1px solid #c0c0c0;box-sizing:border-box"></div>
<div class="t" style="left:249px;top:709px;font-size:10px;line-height:13px;font-weight:bold">&bull;&#8202;Layer 1</div>
<div class="t" style="left:315px;top:708px;font-size:12px;line-height:14px;letter-spacing:0.005px">No objects selected. Click, Shift+click, Alt+scroll mouse on top of objects, or drag around objects to select.</div>
<div class="sep" style="left:1225px;top:703px;width:1px;height:25px"></div>
<div class="t" style="left:1229px;top:702px;font-size:11px;line-height:13px">X:</div>
<div class="t" style="left:1229px;top:715px;font-size:11px;line-height:13px">Y:</div>
<div class="t" style="left:1200px;width:89px;text-align:right;top:702px;font-size:11px;line-height:13px;font-family:'Liberation Mono'">-108.10</div>
<div class="t" style="left:1200px;width:89px;text-align:right;top:715px;font-size:11px;line-height:13px;font-family:'Liberation Mono'">343.96</div>
<div class="t" style="left:1297px;top:708px;font-size:11px;line-height:13px">Z:</div>
<div class="a" style="left:1309px;top:704px;width:46px;height:21px;background:#fff;border:1px solid #c8c8c8;box-sizing:border-box;font-size:11px;line-height:19px;padding-left:9px">35%</div>
<!-- scroll decorations -->
<svg class="a" style="left:0;top:0" width="1366" height="733">
<defs><pattern id="rgbchk" width="2" height="2" patternUnits="userSpaceOnUse"><rect width="2" height="2" fill="#e8f0e8"/><rect width="1" height="1" fill="#30a040"/><rect x="1" y="1" width="1" height="1" fill="#4060a0"/></pattern></defs>
<circle cx="1286.5" cy="85.5" r="6" fill="#fafafa" stroke="#333" stroke-width="1.3"/>
<text x="1282.3" y="88.3" font-family="Liberation Sans" font-size="6.5" font-weight="bold" fill="#333">1:1</text>
<path d="M1291 90.5l4 4" stroke="#333" stroke-width="2.2"/>
<path d="M1284 110l3.5 -3.5l3.5 3.5" fill="none" stroke="#555" stroke-width="1.6"/>
<path d="M1284 632l3.5 3.5l3.5 -3.5" fill="none" stroke="#555" stroke-width="1.6"/>
<linearGradient id="cmg" x1="0" y1="0" x2="1" y2="1"><stop offset="0" stop-color="#20a030"/><stop offset="0.6" stop-color="#3050a0"/><stop offset="1" stop-color="#c03040"/></linearGradient>
<pattern id="cmchk" width="2" height="2" patternUnits="userSpaceOnUse"><rect width="2" height="2" fill="#f0f0f0"/><rect width="1" height="1" fill="url(#cmg)"/></pattern>
<path d="M1282 645L1294.5 655.5L1285 661Z" fill="url(#cmg)" opacity="0.75"/>
<path d="M68 648l-3 3.5l3 3.5" fill="none" stroke="#aaa" stroke-width="1.5"/>
<path d="M1266 648l3 3.5l-3 3.5" fill="none" stroke="#aaa" stroke-width="1.5"/>
<path d="M10 690l-3 3.5l3 3.5" fill="none" stroke="#aaa" stroke-width="1.5"/>
<path d="M1341 690l3 3.5l-3 3.5" fill="none" stroke="#555" stroke-width="1.5"/>
<path d="M639.5 90h10l-5 6z" fill="#000"/>
<path d="M49 106v10l6 -5z" fill="#000"/>
<!-- lock corner -->
<path d="M43 86v-2.5a3.5 3.5 0 0 1 7 0v2.5" fill="none" stroke="#222" stroke-width="1.5"/>
<rect x="41.5" y="86.5" width="10" height="7" fill="#e8b830" stroke="#333"/>
<rect x="46" y="88" width="1.5" height="3" fill="#222"/>
<!-- status icons -->
<path d="M394 0" />
<g>
<rect x="177.5" y="705.5" width="9" height="18" fill="#f4f4f4" stroke="#e2e2e2"/>
<path d="M179 711.5l3 -3l3 3z M179 716.5l3 3l3 -3z" fill="#666"/>
<rect x="1355.5" y="704.5" width="9" height="9" fill="#f8f8f8" stroke="#c8c8c8"/>
<rect x="1355.5" y="714.5" width="9" height="10" fill="#f8f8f8" stroke="#c8c8c8"/>
<path d="M1357.5 711l2.5 -3l2.5 3z M1357.5 718l2.5 3l2.5 -3z" fill="#111"/>
<path d="M198.5 715.5C202 710.5 210 710.5 213.5 715.5C210 720.5 202 720.5 198.5 715.5Z" fill="#fff" stroke="#111" stroke-width="1.3"/>
<circle cx="206" cy="715.5" r="3.3" fill="#111"/>
<path d="M200 712l-1.5-1.5M203 711l-0.8-3M206 710.5v-3.5M209 711l0.8-3M212 712l1.5-1.5" stroke="#111" stroke-width="1.2"/>
<path d="M228.8 713.2L228.3 710.5C228 707.5 230 706.3 232.3 706.5C234.8 706.8 236 708.5 236.2 711" fill="none" stroke="#222" stroke-width="1.4"/>
<path d="M226.5 713.5l10 -1.5l1.5 9l-10 1.5z" fill="#f2e890" stroke="#222" stroke-width="1.2"/>
<rect x="231.5" y="716" width="2" height="3" fill="#222"/>
<path d="M300.5 713l4 4l4 -4" fill="none" stroke="#555" stroke-width="1.1"/>
</g>
</svg>
</body></html>
